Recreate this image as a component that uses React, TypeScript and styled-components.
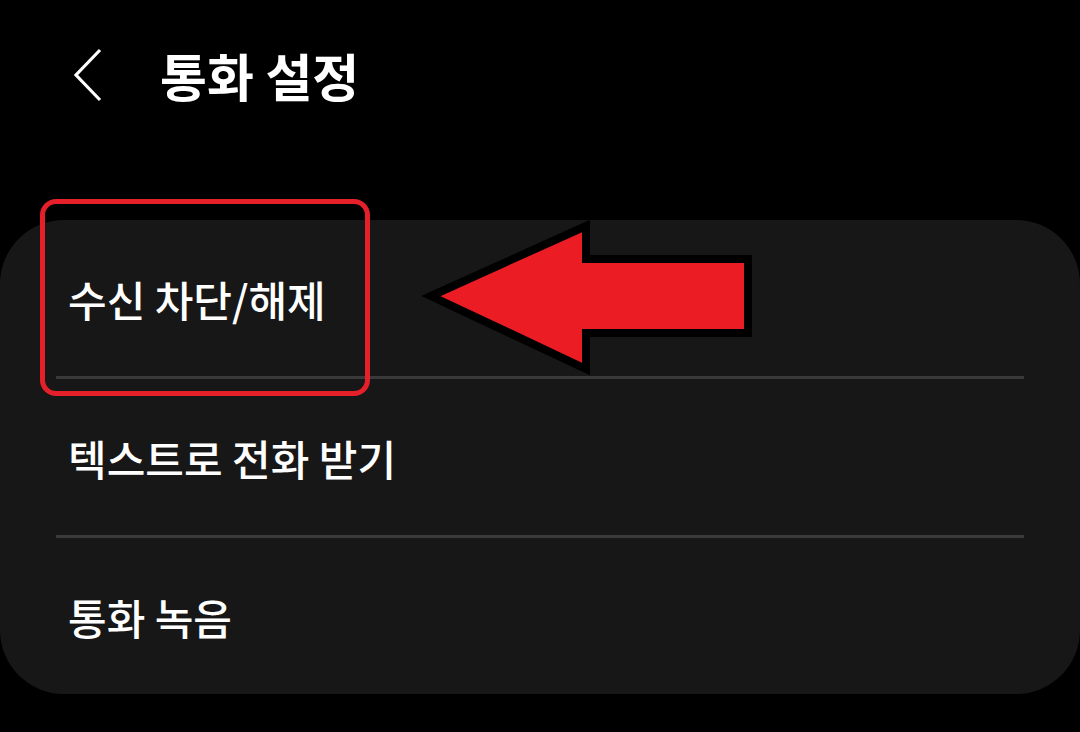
import { Fragment } from 'react';
import styled, { createGlobalStyle } from 'styled-components';

const GlobalStyle = createGlobalStyle`
  html, body {
    margin: 0;
    padding: 0;
    background: #000;
  }
  body {
    font-family: "Noto Sans CJK KR", "Noto Sans", sans-serif;
    color: #fff;
  }
`;

const Screen = styled.div`
  width: 1080px;
  height: 732px;
  background: #000;
  overflow: hidden;
  display: flex;
  flex-direction: column;
`;

const Header = styled.header`
  height: 150px;
  display: flex;
  align-items: center;
  padding-left: 72px;
  gap: 56px;
`;

const BackButton = styled.button`
  background: none;
  border: 0;
  padding: 0;
  width: 32px;
  height: 54px;
  display: flex;
  align-items: center;
  justify-content: center;
  cursor: pointer;
`;

const Title = styled.h1`
  margin: 0;
  font-size: 51px;
  font-weight: 700;
  letter-spacing: 0;
  color: #fff;
`;

const Card = styled.section`
  margin-top: 70px;
  height: 474px;
  background: #171717;
  border-radius: 64px;
  display: flex;
  flex-direction: column;
`;

const Row = styled.div`
  position: relative;
  flex: 1;
  display: flex;
  align-items: center;
  padding-left: 68px;
  font-size: 42px;
  font-weight: 500;
  color: #fff;
`;

const Divider = styled.hr`
  margin: 0 56px;
  border: 0;
  height: 3px;
  background: #3a3a3a;
`;

const Highlight = styled.div`
  position: absolute;
  left: 40px;
  top: -21px;
  width: 330px;
  height: 197px;
  box-sizing: border-box;
  border: 5px solid #e5202a;
  border-radius: 16px;
  pointer-events: none;
`;

const Arrow = styled.svg`
  position: absolute;
  left: 420px;
  top: -3px;
  pointer-events: none;
`;

const items = ['수신 차단/해제', '텍스트로 전화 받기', '통화 녹음'];

export default function App() {
  return (
    <Screen>
      <GlobalStyle />
      <Header>
        <BackButton aria-label="뒤로">
          <svg width="32" height="54" viewBox="0 0 32 54">
            <path d="M28 2 L4 27 L28 52" fill="none" stroke="#fff" strokeWidth="3.2" />
          </svg>
        </BackButton>
        <Title>통화 설정</Title>
      </Header>
      <Card>
        {items.map((label, i) => (
          <Fragment key={label}>
            {i > 0 && <Divider />}
            <Row>
              {label}
              {i === 0 && (
                <>
                  <Highlight />
                  <Arrow width="340" height="160" viewBox="420 217 340 160">
                    <polygon
                      points="431,296 586,226 586,259 748,259 748,333 586,333 586,369"
                      fill="#ec1c24"
                      stroke="#000"
                      strokeWidth="8"
                      strokeLinejoin="miter"
                    />
                  </Arrow>
                </>
              )}
            </Row>
          </Fragment>
        ))}
      </Card>
    </Screen>
  );
}
